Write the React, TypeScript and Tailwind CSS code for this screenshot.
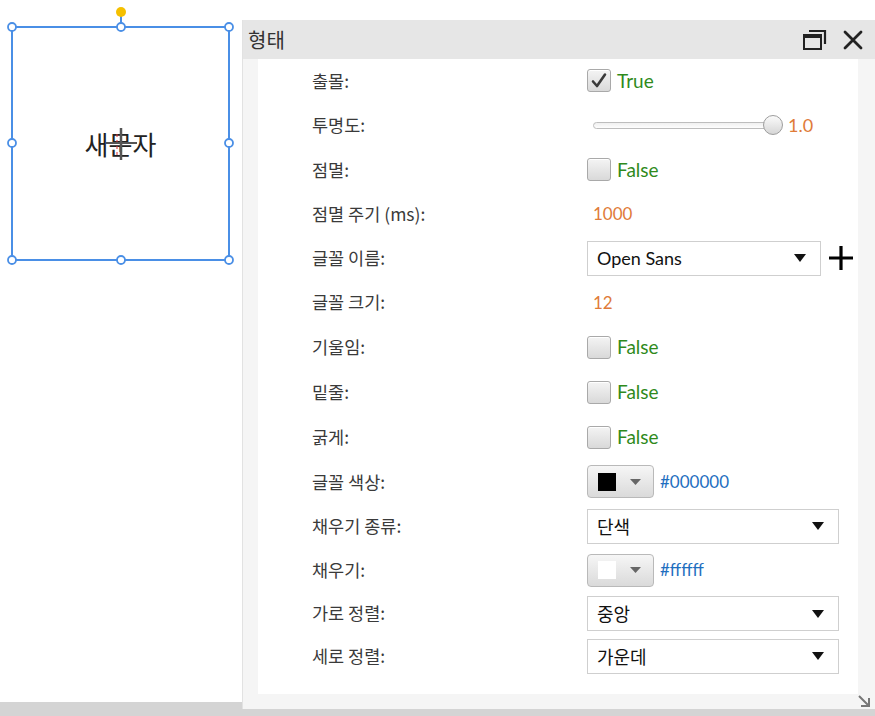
import React from "react";

const KR = { fontFamily: '"Noto Sans CJK KR", "Noto Sans", sans-serif' };
const LAT = { fontFamily: 'Lato, "Noto Sans CJK KR", sans-serif' };

function Check({ checked }: { checked?: boolean }) {
  return (
    <div className="w-[24px] h-[23px] rounded-[3px] border border-[#a9a9a9] bg-gradient-to-b from-[#f4f4f4] to-[#d9d9d9] flex items-center justify-center shadow-[inset_0_1px_0_#fff]">
      {checked && (
        <svg width="18" height="18" viewBox="0 0 18 18">
          <path d="M3 9.5 L7 14 L15 2.5" fill="none" stroke="#3a3a3a" strokeWidth="2.6" strokeLinejoin="round" strokeLinecap="round" />
        </svg>
      )}
    </div>
  );
}

function Arrow() {
  return (
    <svg width="12" height="8" viewBox="0 0 12 8">
      <path d="M0 0 L12 0 L6 8 Z" fill="#111" />
    </svg>
  );
}

function Select({ text, w, latin }: { text: string; w: string; latin?: boolean }) {
  return (
    <div className={`${w} h-[35px] border border-[#cfcfcf] bg-white flex items-center justify-between pl-[9px] pr-[14px]`}>
      <span className="text-[18px] text-[#111]" style={latin ? LAT : KR}>
        {text}
      </span>
      <Arrow />
    </div>
  );
}

function ColorBtn({ color }: { color: string }) {
  return (
    <div className="w-[67px] h-[33px] rounded-[4px] border border-[#b9b9b9] bg-gradient-to-b from-[#f6f6f6] to-[#dadada] flex items-center pl-[10px] gap-[14px]">
      <div className="w-[18px] h-[18px]" style={{ background: color }} />
      <svg width="11" height="6" viewBox="0 0 11 6">
        <path d="M0 0 L11 0 L5.5 6 Z" fill="#666" />
      </svg>
    </div>
  );
}

function Row({ label, h, children }: { label: string; h: string; children: React.ReactNode }) {
  return (
    <div className={`flex items-center ${h}`}>
      <div className="w-[329px] pl-[54px] text-[17.5px] text-[#3a3a3a]" style={KR}>
        {label}
      </div>
      <div className="flex items-center">{children}</div>
    </div>
  );
}

function Bool({ v }: { v: boolean }) {
  return (
    <div className="flex items-center gap-[6px]">
      <Check checked={v} />
      <span className="text-[19px] text-[#2f8a1c]" style={LAT}>
        {v ? "True" : "False"}
      </span>
    </div>
  );
}

export default function App() {
  return (
    <div className="w-[875px] h-[716px] bg-white flex overflow-hidden">
      {/* canvas */}
      <div className="w-[242px] flex flex-col">
        <div className="flex-1 relative">
          <svg className="absolute left-0 top-0" width="242" height="280" viewBox="0 0 242 280">
            <line x1="121" y1="12" x2="121" y2="24" stroke="#4a8fe6" strokeWidth="2" />
            <circle cx="121" cy="12" r="5" fill="#f5c000" />
            <rect x="12" y="27" width="217" height="233" fill="none" stroke="#4a8fe6" strokeWidth="2" />
            {[
              [12, 27], [121, 27], [229, 27],
              [12, 143], [229, 143],
              [12, 260], [121, 260], [229, 260],
            ].map(([x, y], i) => (
              <circle key={i} cx={x} cy={y} r="4" fill="#fff" stroke="#4a8fe6" strokeWidth="1.8" />
            ))}
          </svg>
          <div className="absolute left-[12px] top-[27px] w-[217px] h-[233px] flex items-center justify-center">
            <span className="text-[26px] text-[#222] leading-none" style={KR}>
              새문자
            </span>
          </div>
          <svg className="absolute left-0 top-0" width="242" height="280" viewBox="0 0 242 280">
            <line x1="117" y1="134" x2="117" y2="156" stroke="#e03030" strokeWidth="1" strokeDasharray="3 3" />
            <line x1="106" y1="143" x2="137" y2="143" stroke="#555" strokeWidth="2" />
            <line x1="121" y1="128" x2="121" y2="160" stroke="#555" strokeWidth="2.5" />
          </svg>
        </div>
        <div className="h-[14px] bg-[#d4d4d4]" />
      </div>

      {/* panel */}
      <div className="flex-1 flex flex-col pt-[20px]">
        <div className="h-[689px] flex flex-col bg-[#f5f5f5] border-l border-[#e2e2e2]">
          <div className="h-[40px] bg-[#e6e6e6] flex items-center justify-between pl-[5px] pr-[12px]">
            <span className="text-[20px] text-[#333]" style={KR}>
              형태
            </span>
            <div className="flex items-center gap-[16px]">
              <svg width="24" height="20" viewBox="0 0 24 20">
                <rect x="1" y="5" width="17" height="14" fill="none" stroke="#222" strokeWidth="2" />
                <rect x="1" y="5" width="17" height="3" fill="#222" />
                <path d="M6 1 H22 V14" fill="none" stroke="#222" strokeWidth="2.2" />
              </svg>
              <svg width="20" height="20" viewBox="0 0 20 20">
                <path d="M2 2 L18 18 M18 2 L2 18" stroke="#222" strokeWidth="2.8" strokeLinecap="round" />
              </svg>
            </div>
          </div>
          <div className="flex-1 flex flex-col">
            <div className="h-[635px] ml-[15px] mr-[17px] bg-white flex flex-col">
              <Row label="출몰:" h="h-[43.5px]">
                <Bool v={true} />
              </Row>
              <Row label="투명도:" h="h-[45px]">
                <div className="flex items-center pl-[6px]">
                  <div className="relative w-[190px] h-[20px] flex items-center">
                    <div className="w-[186px] h-[7px] rounded-full border border-[#bdbdbd] bg-gradient-to-b from-[#f0f0f0] to-[#fdfdfd]" />
                    <div className="absolute right-0 top-0 w-[20px] h-[20px] rounded-full border border-[#9d9d9d] bg-gradient-to-b from-[#fbfbfb] to-[#d6d6d6]" />
                  </div>
                  <span className="ml-[5px] text-[18px] text-[#e07b39]" style={LAT}>
                    1.0
                  </span>
                </div>
              </Row>
              <Row label="점멸:" h="h-[44.5px]">
                <Bool v={false} />
              </Row>
              <Row label="점멸 주기 (ms):" h="h-[44px]">
                <span className="pl-[6px] text-[17px] text-[#e07b39]" style={LAT}>
                  1000
                </span>
              </Row>
              <Row label="글꼴 이름:" h="h-[44px]">
                <Select text="Open Sans" w="w-[234px]" latin />
                <svg className="ml-[7px]" width="26" height="26" viewBox="0 0 26 26">
                  <path d="M13 1 V25 M1 13 H25" stroke="#000" strokeWidth="3.2" />
                </svg>
              </Row>
              <Row label="글꼴 크기:" h="h-[44.5px]">
                <span className="pl-[6px] text-[17px] text-[#e07b39]" style={LAT}>
                  12
                </span>
              </Row>
              <Row label="기울임:" h="h-[45px]">
                <Bool v={false} />
              </Row>
              <Row label="밑줄:" h="h-[45px]">
                <Bool v={false} />
              </Row>
              <Row label="굵게:" h="h-[45px]">
                <Bool v={false} />
              </Row>
              <Row label="글꼴 색상:" h="h-[44.5px]">
                <ColorBtn color="#000000" />
                <span className="ml-[6px] text-[17px] text-[#1f6fbf]" style={LAT}>
                  #000000
                </span>
              </Row>
              <Row label="채우기 종류:" h="h-[44px]">
                <Select text="단색" w="w-[252px]" />
              </Row>
              <Row label="채우기:" h="h-[44px]">
                <ColorBtn color="#ffffff" />
                <span className="ml-[6px] text-[17px] text-[#1f6fbf]" style={LAT}>
                  #ffffff
                </span>
              </Row>
              <Row label="가로 정렬:" h="h-[43px]">
                <Select text="중앙" w="w-[252px]" />
              </Row>
              <Row label="세로 정렬:" h="h-[42px]">
                <Select text="가운데" w="w-[252px]" />
              </Row>
            </div>
            <div className="flex-1 flex justify-end items-end pr-[4px] pb-[1px]">
              <svg width="14" height="14" viewBox="0 0 14 14">
                <path d="M2 2 L11 11 M4 12 H12 V4" fill="none" stroke="#777" strokeWidth="2" />
              </svg>
            </div>
          </div>
        </div>
        <div className="flex-1 bg-[#d4d4d4]" />
      </div>
    </div>
  );
}
